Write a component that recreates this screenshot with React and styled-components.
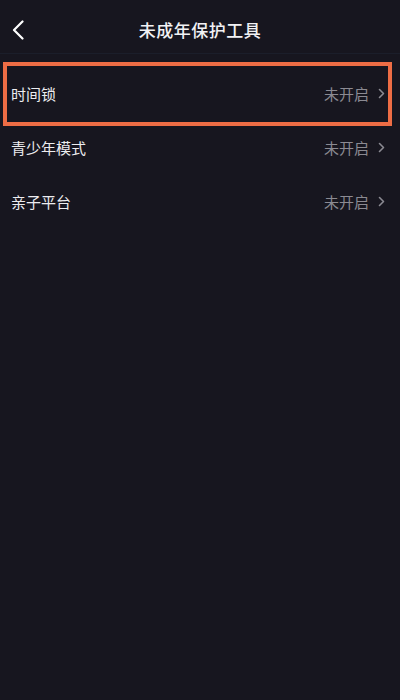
import React from "react";
import styled, { createGlobalStyle } from "styled-components";

const Global = createGlobalStyle`
  html, body { margin: 0; padding: 0; background: #17161f; }
  body { font-family: "Noto Sans CJK SC", "Noto Sans", sans-serif; }
`;

const Page = styled.div`
  width: 400px;
  height: 700px;
  background: #17161f;
  color: #fff;
  display: flex;
  flex-direction: column;
`;

const Header = styled.div`
  height: 54px;
  padding-top: 6px;
  display: grid;
  grid-template-columns: 52px 1fr 52px;
  align-items: center;
  border-bottom: 1px solid #1b1e2a;
  box-sizing: border-box;
`;

const BackButton = styled.div`
  display: flex;
  align-items: center;
  padding-left: 12px;
  height: 100%;
`;

const Title = styled.div`
  text-align: center;
  font-size: 17px;
  font-weight: 500;
  color: #f2f2f4;
  letter-spacing: 0.5px;
`;

const List = styled.div`
  display: flex;
  flex-direction: column;
  padding-top: 12px;
`;

const Row = styled.div`
  position: relative;
  height: 54px;
  display: flex;
  align-items: center;
  justify-content: space-between;
  padding: 0 15px 0 11px;
`;

const Label = styled.span`
  font-size: 15px;
  color: #ececef;
`;

const Right = styled.div`
  display: flex;
  align-items: center;
  gap: 9px;
`;

const Status = styled.span`
  font-size: 15px;
  color: #8b8a92;
`;

const Highlight = styled.div`
  position: absolute;
  left: 3px;
  right: 8px;
  top: -4px;
  bottom: -6px;
  border: 4px solid #ee6d45;
  box-sizing: border-box;
  pointer-events: none;
`;

const Chevron = () => (
  <svg width="7" height="11" viewBox="0 0 7 11">
    <polyline points="1.5,1.5 5.5,5.5 1.5,9.5" fill="none" stroke="#8b8a92" strokeWidth="1.6" strokeLinecap="round" strokeLinejoin="round" />
  </svg>
);

const items = [
  { label: "时间锁", status: "未开启", highlighted: true },
  { label: "青少年模式", status: "未开启" },
  { label: "亲子平台", status: "未开启" },
];

export default function App() {
  return (
    <Page>
      <Global />
      <Header>
        <BackButton>
          <svg width="12" height="20" viewBox="0 0 12 20">
            <polyline points="10.5,1.5 2,10 10.5,18.5" fill="none" stroke="#ffffff" strokeWidth="2.2" strokeLinecap="round" strokeLinejoin="round" />
          </svg>
        </BackButton>
        <Title>未成年保护工具</Title>
        <div />
      </Header>
      <List>
        {items.map((it) => (
          <Row key={it.label}>
            <Label>{it.label}</Label>
            <Right>
              <Status>{it.status}</Status>
              <Chevron />
            </Right>
            {it.highlighted && <Highlight />}
          </Row>
        ))}
      </List>
    </Page>
  );
}
